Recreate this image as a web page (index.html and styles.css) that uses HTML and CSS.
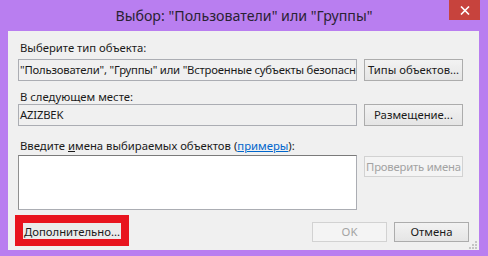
FILE: index.html
```html
<!DOCTYPE html>
<html lang="ru">
<head>
    <meta charset="UTF-8">
    <meta name="viewport" content="width=device-width, initial-scale=1.0">
    <title>Выбор: "Пользователи" или "Группы"</title>
    <link rel="stylesheet" href="styles.css">
</head>
<body>

    <div class="window">
        <!-- Заголовок окна -->
        <div class="titlebar">
            <span class="title">Выбор: "Пользователи" или "Группы"</span>
            <div class="close">
                <svg width="10" height="9" viewBox="0 0 10 9">
                    <path d="M1 0.5 L9 8.5 M9 0.5 L1 8.5" stroke="#fff" stroke-width="1.6"/>
                </svg>
            </div>
        </div>

        <div class="client">
            <div class="label label-first">Выберите тип объекта:</div>
            <div class="row">
                <div class="field readonly">"Пользователи", "Группы" или "Встроенные субъекты безопасности"</div>
                <button class="btn">Типы объектов...</button>
            </div>

            <div class="label label-second">В следующем месте:</div>
            <div class="row">
                <div class="field readonly">AZIZBEK</div>
                <button class="btn">Размещение...</button>
            </div>

            <div class="label label-third">Введите <u>и</u>мена выбираемых объектов (<a href="#" class="link">примеры</a>):</div>
            <div class="row">
                <div class="field names"></div>
                <button class="btn disabled">Проверить имена</button>
            </div>

            <div class="footer">
                <div class="mark">
                    <button class="btn btn-more">Дополнительно...</button>
                </div>
                <div class="actions">
                    <button class="btn btn-ok disabled">OK</button>
                    <button class="btn btn-cancel">Отмена</button>
                </div>
            </div>

            <!-- Уголок для изменения размера -->
            <svg class="grip" width="9" height="9" viewBox="0 0 9 9">
                <rect x="7" y="1" width="2" height="2" fill="#c4c4c4"/>
                <rect x="4" y="4" width="2" height="2" fill="#c4c4c4"/>
                <rect x="7" y="4" width="2" height="2" fill="#c4c4c4"/>
                <rect x="1" y="7" width="2" height="2" fill="#c4c4c4"/>
                <rect x="4" y="7" width="2" height="2" fill="#c4c4c4"/>
                <rect x="7" y="7" width="2" height="2" fill="#c4c4c4"/>
            </svg>
        </div>
    </div>

</body>
</html>
```

FILE: styles.css
```css
/* Основа */
body {
    margin: 0;
    padding: 0;
    font-family: 'Noto Sans', 'Liberation Sans', sans-serif;
    font-size: 11.3px;
    color: #1a1a1a;
}

/* Окно */
.window {
    width: 488px;
    height: 256px;
    background-color: #b97ef0;
    display: flex;
    flex-direction: column;
}

.titlebar {
    position: relative;
    height: 31px;
    display: flex;
    align-items: center;
    justify-content: center;
}

.title {
    font-size: 14.2px;
    color: #2a2233;
    margin-top: -1px;
}

.close {
    position: absolute;
    top: 0;
    right: 8px;
    width: 31px;
    height: 20px;
    background-color: #c7433d;
    display: flex;
    align-items: center;
    justify-content: center;
}

/* Рабочая область */
.client {
    position: relative;
    margin: 0 9px 0 8px;
    height: 219px;
    background-color: #f0f0f0;
    padding: 0 16px 0 10px;
    box-sizing: border-box;
}

.label {
    line-height: 14px;
    padding-left: 2px;
    white-space: nowrap;
}

.label-first {
    padding-top: 10px;
    margin-bottom: 4px;
}

.label-second {
    margin-top: 9px;
}

.label-third {
    margin-top: 13px;
    margin-bottom: 2px;
}

.link {
    color: #0066cc;
}

.row {
    display: flex;
    gap: 7px;
    align-items: flex-start;
}

.field {
    width: 339px;
    height: 22px;
    box-sizing: border-box;
    border: 1px solid #abadb3;
    padding: 0 1px;
    line-height: 19px;
    letter-spacing: -0.2px;
    white-space: nowrap;
    overflow: hidden;
}

.readonly {
    background-color: #f0f0f0;
}

.names {
    height: 55px;
    background-color: #fff;
    border-top-color: #7a7a7a;
    border-left-color: #8f8f8f;
}

/* Кнопки */
.btn {
    font-family: inherit;
    font-size: 11.3px;
    color: #1a1a1a;
    width: 99px;
    height: 22px;
    padding: 0;
    border: 1px solid #acacac;
    background: linear-gradient(#f2f2f2, #e5e5e5);
    line-height: 18px;
    white-space: nowrap;
}

.row .btn.disabled {
    margin-top: 1px;
    height: 21px;
    letter-spacing: -0.2px;
}

.btn.disabled {
    color: #a3a3a3;
    border-color: #d2d2d2;
    background: #f4f4f4;
}

.footer {
    display: flex;
    justify-content: space-between;
    align-items: flex-start;
    margin: 5px -6px 0 -3px;
}

.mark {
    background-color: #e8141e;
    padding: 8px 8px 7px 8px;
}

.btn-more {
    width: 98px;
    height: 16px;
    border: none;
    background: #ebebeb;
    line-height: 15px;
}

.actions {
    display: flex;
    gap: 7px;
    margin-top: 7px;
}

.btn-ok,
.btn-cancel {
    width: 75px;
    height: 20px;
}

.grip {
    position: absolute;
    right: 2px;
    bottom: 1px;
}
```
